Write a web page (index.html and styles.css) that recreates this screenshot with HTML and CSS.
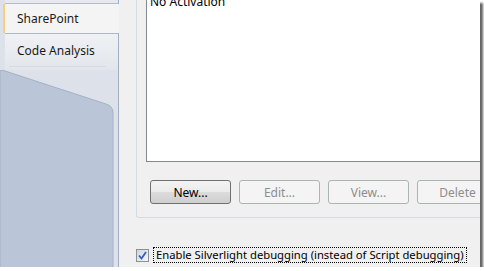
FILE: index.html
```html
<!DOCTYPE html>
<html lang="en">
<head>
    <meta charset="UTF-8">
    <title>SharePoint</title>
    <link rel="stylesheet" href="styles.css">
</head>
<body>
    <div class="window">
        <div class="sidebar">
            <div class="tab-prev"></div>
            <div class="tab tab-current">SharePoint</div>
            <div class="tab tab-other">Code Analysis</div>
            <svg class="tail" width="118" height="200" viewBox="0 0 118 200">
                <path d="M0 0 L5 1 L106 34 Q113 36 113 43 L113 200 L0 200 Z" fill="#bac6d7" stroke="#a4b1c4" stroke-width="1"/>
            </svg>
        </div>
        <div class="content">
            <div class="group">
                <div class="list">No Activation</div>
                <div class="buttons">
                    <button class="btn">New...</button>
                    <button class="btn" disabled>Edit...</button>
                    <button class="btn" disabled>View...</button>
                    <button class="btn" disabled>Delete</button>
                </div>
            </div>
            <div class="check-row">
                <span class="checkbox">
                    <svg width="9" height="9" viewBox="0 0 9 9">
                        <path d="M1 4.5 L3.5 7.5 L8 1" fill="none" stroke="#3a5fb0" stroke-width="1.8"/>
                    </svg>
                </span>
                <span class="check-label">Enable Silverlight debugging (instead of Script debugging)</span>
            </div>
        </div>
    </div>
</body>
</html>
```

FILE: styles.css
```css
body {
    margin: 0;
    padding: 0;
    background: #ffffff;
    font-family: 'Noto Sans', 'Open Sans', sans-serif;
    font-size: 12px;
    color: #1a1a1a;
}

.window {
    display: flex;
    width: 480px;
    height: 267px;
    overflow: hidden;
    box-shadow: 3px 3px 2px rgba(50, 50, 50, 0.75);
}

.sidebar {
    width: 118px;
    flex-shrink: 0;
    display: flex;
    flex-direction: column;
    background: #dde2ea;
    border-right: 1px solid #a2afc2;
}

.tab-prev {
    flex-shrink: 0;
    height: 3px;
    margin-left: 5px;
    background: #e7e9ee;
    border-bottom: 1px solid #b2bccb;
}

.tab {
    flex-shrink: 0;
    display: flex;
    align-items: center;
    padding-left: 12px;
    box-sizing: border-box;
    color: #1a1a1a;
}

.tab-current {
    height: 29px;
    margin-left: 3px;
    margin-right: -1px;
    padding-left: 12px;
    background: #f4f4f4;
    border-left: 2px solid #f3cf7e;
}

.tab-other {
    position: relative;
    height: 37px;
    margin-left: 5px;
    padding-bottom: 3px;
    background: linear-gradient(#eff1f4, #e2e6ec);
    border-top: 1px solid #aeb8c8;
}

.tab-other::after {
    content: "";
    position: absolute;
    left: 4px;
    right: 12px;
    bottom: 3px;
    border-bottom: 1px solid #d6dbe3;
}

.tail {
    display: block;
    flex-shrink: 0;
}

.content {
    flex: 1;
    min-width: 0;
    background: #f0f0f0;
    padding-left: 17px;
    overflow: hidden;
}

.group {
    margin-top: -20px;
    padding: 0 0 13px 9px;
    border-left: 1px solid #d5dbe2;
    border-bottom: 1px solid #d5dbe2;
    border-bottom-left-radius: 3px;
}

.list {
    height: 182px;
    box-sizing: border-box;
    margin-right: -4px;
    padding: 13px 0 0 3px;
    line-height: 16px;
    color: #000;
    background: #ffffff;
    border: 1px solid #828790;
}

.buttons {
    display: flex;
    gap: 8px;
    margin-top: 18px;
    padding-left: 4px;
}

.btn {
    flex-shrink: 0;
    width: 81px;
    height: 24px;
    padding: 0;
    font-family: inherit;
    font-size: 12px;
    color: #000;
    background: linear-gradient(#f3f3f3 0%, #ebebeb 50%, #dcdcdc 51%, #cfcfcf 100%);
    border: 1px solid #707070;
    border-radius: 3px;
}

.btn:disabled {
    color: #8d8d8d;
    background: #f4f4f4;
    border-color: #adb2b5;
}

.check-row {
    display: flex;
    align-items: center;
    gap: 5px;
    margin-top: 30px;
    white-space: nowrap;
}

.checkbox {
    flex-shrink: 0;
    display: flex;
    align-items: center;
    justify-content: center;
    width: 11px;
    height: 11px;
    background: linear-gradient(135deg, #cbd7e8, #f4f7fb);
    border: 1px solid #8e8f8f;
}

.check-label {
    flex-shrink: 0;
    padding: 0 2px;
    font-size: 11.25px;
    line-height: 14px;
    color: #000;
    outline: 1px dotted #000;
}
```
